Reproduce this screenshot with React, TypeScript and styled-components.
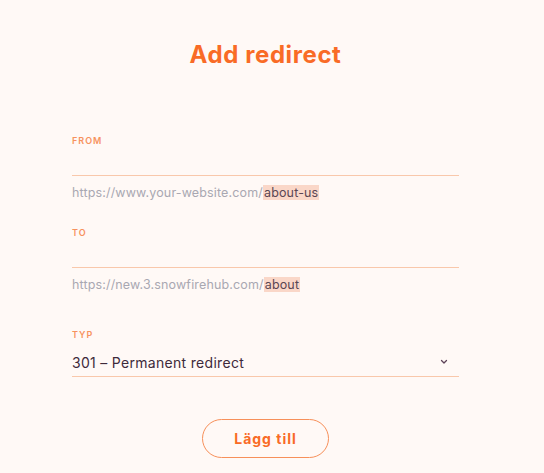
import React from 'react';
import styled, { createGlobalStyle } from 'styled-components';

const GlobalStyle = createGlobalStyle`
  html, body {
    margin: 0;
    padding: 0;
    background: #fff9f6;
  }
  body {
    font-family: Inter, "Noto Sans", sans-serif;
  }
`;

const Page = styled.div`
  width: 387px;
  margin-left: 72px;
  padding-top: 40px;
`;

const Title = styled.h1`
  margin: 0 0 66px;
  text-align: center;
  font-size: 24px;
  font-weight: 700;
  letter-spacing: 0.6px;
  color: #f96b26;
`;

const Field = styled.div<{ $gap?: number }>`
  display: flex;
  flex-direction: column;
  margin-bottom: ${(p) => p.$gap ?? 27}px;
`;

const Label = styled.label`
  font-size: 9px;
  font-weight: 600;
  letter-spacing: 1px;
  color: #f7925e;
  text-transform: uppercase;
`;

const Input = styled.input`
  border: 0 solid transparent;
  border-bottom: 1.5px solid #f9c8ab;
  background: transparent;
  height: 27px;
  margin-top: 2px;
  padding: 0;
  outline: none;
`;

const Hint = styled.div`
  margin-top: 9px;
  font-size: 12.5px;
  letter-spacing: 0.15px;
  color: #a9a8b2;
`;

const Mark = styled.span`
  background: #fad7c8;
  color: #5b4653;
  padding: 0 1px;
`;

const SelectBox = styled.div`
  display: flex;
  align-items: center;
  justify-content: space-between;
  height: 28px;
  padding-top: 4px;
  margin-top: 4px;
  border-bottom: 1.5px solid #f9c8ab;
  font-size: 14px;
  letter-spacing: 0.3px;
  color: #3e2a3b;
`;

const Chevron = styled.svg`
  width: 10px;
  height: 10px;
  margin-right: 10px;
  color: #5e4358;
`;

const Actions = styled.div`
  display: flex;
  justify-content: center;
  margin-top: 42px;
`;

const Button = styled.button`
  width: 127px;
  height: 39px;
  border: 1.5px solid #f7905a;
  border-radius: 20px;
  background: transparent;
  font-family: Inter, "Noto Sans", sans-serif;
  font-size: 14px;
  font-weight: 700;
  letter-spacing: 1px;
  color: #f96b26;
  cursor: pointer;
`;

export default function App() {
  return (
    <Page>
      <GlobalStyle />
      <Title>Add redirect</Title>
      <Field>
        <Label>From</Label>
        <Input />
        <Hint>
          https://www.your-website.com/<Mark>about-us</Mark>
        </Hint>
      </Field>
      <Field $gap={37}>
        <Label>To</Label>
        <Input />
        <Hint>
          https://new.3.snowfirehub.com/<Mark>about</Mark>
        </Hint>
      </Field>
      <Field $gap={0}>
        <Label>Typ</Label>
        <SelectBox>
          <span>301 – Permanent redirect</span>
          <Chevron viewBox="0 0 10 10" fill="none">
            <path d="M2.5 3.5 L5 6 L7.5 3.5" stroke="currentColor" strokeWidth="1.3" strokeLinecap="round" strokeLinejoin="round" />
          </Chevron>
        </SelectBox>
      </Field>
      <Actions>
        <Button>Lägg till</Button>
      </Actions>
    </Page>
  );
}
